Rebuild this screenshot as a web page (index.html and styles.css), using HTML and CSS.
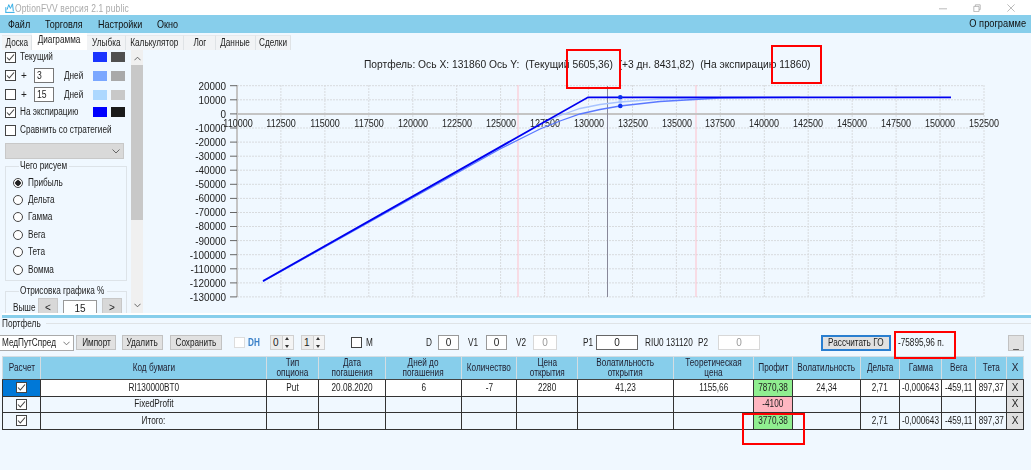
FILE: index.html
```html
<!DOCTYPE html>
<html lang="ru">
<head>
<meta charset="utf-8">
<title>OptionFVV</title>
<link rel="stylesheet" href="styles.css">
</head>
<body>
<div class="app">
  <header class="titlebar">
    <svg class="appicon" viewBox="0 0 12 12"><path d="M1 11.500V5M.5 11.300h11M2.500 8l2-6 2 4.500 2.500-5.500 1 9" fill="none" stroke="#35aee6" stroke-width="1.200"/></svg>
    <span class="apptitle nl">OptionFVV версия 2.1 public</span>
    <div class="winbtns">
      <svg viewBox="0 0 10 10"><path d="M0 6h10" stroke="#aaa" fill="none"/></svg>
      <svg viewBox="0 0 10 10"><path d="M1 3h6.500v6.500H1zM3 3V1h6v6H7.500" stroke="#aaa" fill="none"/></svg>
      <svg viewBox="0 0 10 10"><path d="M.5.500l9 9M9.500.500l-9 9" stroke="#aaa" fill="none"/></svg>
    </div>
  </header>
  <nav class="menubar">
    <span class="mi mi1 nl">Файл</span><span class="mi mi2 nl">Торговля</span><span class="mi mi3 nl">Настройки</span><span class="mi mi4 nl">Окно</span>
    <span class="menu-right">О программе</span>
  </nav>
  <div class="tabs">
    <span class="tab t1"><span class="n">Доска</span></span><span class="tab active t2"><span class="n">Диаграмма</span></span><span class="tab t3"><span class="n">Улыбка</span></span><span class="tab t4"><span class="n">Калькулятор</span></span><span class="tab t5"><span class="n">Лог</span></span><span class="tab t6"><span class="n">Данные</span></span><span class="tab t7"><span class="n">Сделки</span></span>
  </div>
  <main class="main">
    <aside class="side">
      <div class="row r1"><i class="cb on"></i><span class="lbl nl">Текущий</span><i class="sw s1"></i><i class="sw s2"></i></div>
      <div class="row r2"><i class="cb on"></i><span class="plus">+</span><span class="num"><span class="nl">3</span></span><span class="days nl">Дней</span><i class="sw s3"></i><i class="sw s4"></i></div>
      <div class="row r3"><i class="cb"></i><span class="plus">+</span><span class="num"><span class="nl">15</span></span><span class="days nl">Дней</span><i class="sw s5"></i><i class="sw s6"></i></div>
      <div class="row r4"><i class="cb on"></i><span class="lbl nl">На экспирацию</span><i class="sw s7"></i><i class="sw s8"></i></div>
      <div class="row r5"><i class="cb"></i><span class="lbl nl">Сравнить со стратегией</span></div>
      <div class="combo"><svg viewBox="0 0 8 5"><path d="M.5.500l3.500 3.500 3.500-3.500" fill="none" stroke="#666"/></svg></div>
      <fieldset class="grp g1">
        <legend class="lg1"><span class="nl">Чего рисуем</span></legend>
        <div class="radio"><i class="rd on"></i><span class="nl">Прибыль</span></div>
        <div class="radio"><i class="rd"></i><span class="nl">Дельта</span></div>
        <div class="radio"><i class="rd"></i><span class="nl">Гамма</span></div>
        <div class="radio"><i class="rd"></i><span class="nl">Вега</span></div>
        <div class="radio"><i class="rd"></i><span class="nl">Тета</span></div>
        <div class="radio"><i class="rd"></i><span class="nl">Вомма</span></div>
      </fieldset>
      <fieldset class="grp g2">
        <legend class="lg2"><span class="nl">Отрисовка графика %</span></legend>
        <div class="above"><span class="ab-l nl">Выше</span><span class="ab-b">&lt;</span><span class="ab-v">15</span><span class="ab-b">&gt;</span></div>
      </fieldset>
    </aside>
    <div class="vscroll">
      <svg class="sa" viewBox="0 0 8 5"><path d="M.5 4.500L4 1l3.500 3.500" fill="none" stroke="#555"/></svg>
      <div class="thumb"></div>
      <svg class="sa sb" viewBox="0 0 8 5"><path d="M.5.500L4 4l3.500-3.500" fill="none" stroke="#555"/></svg>
    </div>
    <svg class="chart" viewBox="145 50 886 263" width="886" height="263">
      <text class="ctitle" x="364" y="68">Портфель: Ось X: 131860 Ось Y:  (Текущий 5605,36)  (+3 дн. 8431,82)  (На экспирацию 11860)</text>
      <path class="grid" d="M237 85.700H984M237 99.800H984M237 128H984M237 142.100H984M237 156.200H984M237 170.200H984M237 184.300H984M237 198.400H984M237 212.500H984M237 226.500H984M237 240.600H984M237 254.700H984M237 268.800H984M237 282.900H984M237 296.900H984"/>
      <path class="grid" d="M280.900 85V297M324.900 85V297M368.800 85V297M412.800 85V297M456.700 85V297M500.600 85V297M544.600 85V297M588.500 85V297M632.500 85V297M676.400 85V297M720.300 85V297M764.300 85V297M808.200 85V297M852.200 85V297M896.100 85V297M940 85V297M984 85V297"/>
      <path class="pink" d="M518 85V297M696 85V297"/>
      <path class="axis" d="M237 85V297M237 114H984"/>
      <path class="tick" d="M230 85.700h7M230 99.800h7M230 113.900h7M230 128h7M230 142.100h7M230 156.200h7M230 170.200h7M230 184.300h7M230 198.400h7M230 212.500h7M230 226.500h7M230 240.600h7M230 254.700h7M230 268.800h7M230 282.900h7M230 296.900h7"/>
      <g class="yl">
        <text x="226" y="89.700">20000</text><text x="226" y="103.800">10000</text><text x="226" y="117.900">0</text><text x="226" y="132">-10000</text><text x="226" y="146.100">-20000</text><text x="226" y="160.200">-30000</text><text x="226" y="174.200">-40000</text><text x="226" y="188.300">-50000</text><text x="226" y="202.400">-60000</text><text x="226" y="216.500">-70000</text><text x="226" y="230.500">-80000</text><text x="226" y="244.600">-90000</text><text x="226" y="258.700">-100000</text><text x="226" y="272.800">-110000</text><text x="226" y="286.900">-120000</text><text x="226" y="300.900">-130000</text>
      </g>
      <g class="xl">
        <text x="238" y="127">110000</text><text x="281" y="127">112500</text><text x="325" y="127">115000</text><text x="369" y="127">117500</text><text x="413" y="127">120000</text><text x="457" y="127">122500</text><text x="501" y="127">125000</text><text x="545" y="127">127500</text><text x="589" y="127">130000</text><text x="633" y="127">132500</text><text x="677" y="127">135000</text><text x="720" y="127">137500</text><text x="764" y="127">140000</text><text x="808" y="127">142500</text><text x="852" y="127">145000</text><text x="896" y="127">147500</text><text x="940" y="127">150000</text><text x="984" y="127">152500</text>
      </g>
      <path class="cross" d="M607.500 86V297"/>
      <path class="l3" d="M263 281.500L500 147.500 520 136 540 124 560 115.500 580 108.500 600 104.500 620 102 660 99 720 97.600 800 97.300"/>
      <path class="l1" d="M263 281.500L500 149 520 139 540 129 560 121 580 114 600 109.500 620 106 660 101.500 720 98 800 97.300"/>
      <path class="l0" d="M263 281L588 97.300H951"/>
      <circle class="dot" cx="620.300" cy="97.300" r="2.300"/>
      <circle class="dot-l" cx="620.300" cy="102" r="2"/>
      <circle class="dot" cx="620.300" cy="106" r="2.300"/>
    </svg>
  </main>
  <div class="splitter"></div>
  <section class="bottom">
    <div class="group-head"><span class="nl">Портфель</span></div>
    <div class="toolbar">
      <div class="select"><span class="nl">МедПутСпред</span><svg viewBox="0 0 8 5"><path d="M.5.500l3.500 3.500 3.500-3.500" fill="none" stroke="#666"/></svg></div>
      <span class="btn b-imp"><span class="n">Импорт</span></span>
      <span class="btn b-del"><span class="n">Удалить</span></span>
      <span class="btn b-sav"><span class="n">Сохранить</span></span>
      <i class="cb dis m-dh"></i><span class="dh nl">DH</span>
      <span class="spin m-s1">0<b class="arrows"></b></span>
      <span class="spin m-s2">1<b class="arrows"></b></span>
      <i class="cb m-m"></i><span class="m-ml nl">M</span>
      <span class="m-d nl">D</span><span class="inp w21 m-i1">0</span>
      <span class="m-v1 nl">V1</span><span class="inp w21 m-i2">0</span>
      <span class="m-v2 nl">V2</span><span class="inp w24 dis m-i3">0</span>
      <span class="m-p1 nl">P1</span><span class="inp w42 dark m-i4">0</span>
      <span class="m-riu nl">RIU0 131120</span><span class="m-p2 nl">P2</span><span class="inp w42 dis m-i5">0</span>
      <span class="btn go"><span class="n">Рассчитать ГО</span></span>
      <span class="m-val nl">-75895,96 п.</span>
      <span class="btn under">_</span>
    </div>
    <table class="grid-t">
      <colgroup><col class="c1"><col class="c2"><col class="c3"><col class="c4"><col class="c5"><col class="c6"><col class="c7"><col class="c8"><col class="c9"><col class="c10"><col class="c11"><col class="c12"><col class="c13"><col class="c14"><col class="c15"><col class="c16"></colgroup>
      <thead>
        <tr><th><span class="n">Расчет</span></th><th><span class="n">Код бумаги</span></th><th><span class="n">Тип<br>опциона</span></th><th><span class="n">Дата<br>погашения</span></th><th><span class="n">Дней до<br>погашения</span></th><th><span class="n">Количество</span></th><th><span class="n">Цена<br>открытия</span></th><th><span class="n">Волатильность<br>открытия</span></th><th><span class="n">Теоретическая<br>цена</span></th><th><span class="n">Профит</span></th><th><span class="n">Волатильность</span></th><th><span class="n">Дельта</span></th><th><span class="n">Гамма</span></th><th><span class="n">Вега</span></th><th><span class="n">Тета</span></th><th>X</th></tr>
      </thead>
      <tbody>
        <tr><td class="sel"><i class="cb on"></i></td><td><span class="n">RI130000BT0</span></td><td><span class="n">Put</span></td><td><span class="n">20.08.2020</span></td><td><span class="n">6</span></td><td><span class="n">-7</span></td><td><span class="n">2280</span></td><td><span class="n">41,23</span></td><td><span class="n">1155,66</span></td><td class="green"><span class="n">7870,38</span></td><td><span class="n">24,34</span></td><td><span class="n">2,71</span></td><td><span class="n">-0,000643</span></td><td><span class="n">-459,11</span></td><td><span class="n">897,37</span></td><td class="x">X</td></tr>
        <tr><td><i class="cb on"></i></td><td><span class="n">FixedProfit</span></td><td></td><td></td><td></td><td></td><td></td><td></td><td></td><td class="red"><span class="n">-4100</span></td><td></td><td></td><td></td><td></td><td></td><td class="x">X</td></tr>
        <tr><td><i class="cb on"></i></td><td><span class="n">Итого:</span></td><td></td><td></td><td></td><td></td><td></td><td></td><td></td><td class="green"><span class="n">3770,38</span></td><td></td><td><span class="n">2,71</span></td><td><span class="n">-0,000643</span></td><td><span class="n">-459,11</span></td><td><span class="n">897,37</span></td><td class="x">X</td></tr>
      </tbody>
    </table>
  </section>
  <div class="mark m1"></div>
  <div class="mark m2"></div>
  <div class="mark m3"></div>
  <div class="mark m4"></div>
</div>
</body>
</html>
```

FILE: styles.css
```css
* { box-sizing: border-box; }
html, body { margin: 0; padding: 0; }
body { width: 1031px; height: 470px; overflow: hidden; background: #f0f8ff; }
.app {
  position: relative; width: 1031px; height: 470px; overflow: hidden;
  font: 10px/12px "Liberation Sans", Arial, sans-serif; color: #222;
  filter: blur(0.3px);
}
i { display: block; font-style: normal; flex: none; }

/* the reference's text is horizontally condensed */
.n { display: inline-block; margin: 0 -40px; transform: scaleX(.82); transform-origin: center; white-space: nowrap; }
.nl { display: inline-block; transform: scaleX(.82); transform-origin: left center; white-space: nowrap; }

/* title */
.titlebar { height: 15px; background: #fff; display: flex; align-items: center; padding-left: 5px; }
.appicon { width: 10px; height: 12px; flex: none; }
.apptitle { margin-left: 0; color: #aaa; font-size: 11px; letter-spacing: .2px; transform: scaleX(.77); }
.winbtns { margin-left: auto; display: flex; gap: 26px; padding-right: 16px; }
.winbtns svg { width: 8px; height: 8px; }

/* menu */
.menubar { height: 18px; background: #87ceeb; display: flex; align-items: center; padding: 0 5px 0 8px; font-size: 11px; color: #111; }
.mi1 { width: 37px; } .mi2 { width: 53px; } .mi3 { width: 59px; }
.menu-right { margin-left: auto; font-size: 10px; transform: scaleX(.93); transform-origin: right center; }

/* tabs */
.tabs { height: 17px; display: flex; align-items: flex-end; padding-left: 2px; }
.tab { height: 15px; background: #f1f3f5; border-right: 1px solid #dfe3e6; border-top: 1px solid #e6e9ec; text-align: center; line-height: 14px; }
.tab.active { height: 17px; background: #fff; border: 0; line-height: 14px; }
.t1 { width: 30px; } .t2 { width: 55px; } .t3 { width: 39px; } .t4 { width: 58px; } .t5 { width: 32px; } .t6 { width: 40px; } .t7 { width: 35px; }

/* main */
.main { height: 263px; display: flex; overflow: hidden; }
.side { width: 131px; height: 263px; overflow: hidden; padding-left: 5px; flex: none; }
.row { display: flex; align-items: center; width: 120px; }
.r1 { height: 16px; margin-top: -1px; }
.r2 { height: 17px; margin-top: 2px; }
.r3 { height: 17px; margin-top: 2px; }
.r4 { height: 14px; margin-top: 2px; }
.r5 { height: 14px; margin-top: 4px; }
.cb { width: 11px; height: 11px; border: 1px solid #444; background: #fff center/9px 9px no-repeat; }
.cb.on { background-image: url("data:image/svg+xml,%3Csvg xmlns='http://www.w3.org/2000/svg' viewBox='0 0 9 9'%3E%3Cpath d='M1 4.500l2.300 2.500L8 1.500' fill='none' stroke='%23444' stroke-width='1.100'/%3E%3C/svg%3E"); }
.cb.dis { border-color: #ddd; }
.lbl { margin-left: 4px; flex: 1; }
.plus { margin-left: 5px; width: 8px; }
.num { margin-left: 5px; width: 20px; height: 15px; background: #fff; border: 1px solid #777; padding-left: 2px; line-height: 13px; font-size: 10.500px; }
.days { margin-left: 10px; flex: 1; }
.sw { width: 14px; height: 10px; }
.sw + .sw { margin-left: 4px; }
.s1 { background: #1a35ff; } .s2 { background: #505050; }
.s3 { background: #7aa7ff; } .s4 { background: #a9a9a9; }
.s5 { background: #add8ff; } .s6 { background: #c8c8c8; }
.s7 { background: #0000ff; } .s8 { background: #1a1a1a; }
.combo { width: 119px; height: 16px; margin-top: 6px; background: #d9d9d9; border: 1px solid #c8c8c8; display: flex; align-items: center; justify-content: flex-end; padding-right: 3px; }
.combo svg { width: 8px; height: 5px; }
.grp { margin: 1px 0 0; padding: 0; border: 1px solid #dde3e8; width: 122px; min-width: 0; position: relative; }
.grp legend { margin-left: 6px; padding: 0 1px; line-height: 12px; }
.lg1 { width: 50px; }
.lg2 { width: 88px; }
.g1 { height: 121px; padding: 2px 0 0 7px; }
.g2 { height: 40px; margin-top: 4px; padding: 2px 0 0 7px; }
.radio { height: 17.400px; display: flex; align-items: center; gap: 5px; }
.rd { width: 10px; height: 10px; border: 1px solid #444; border-radius: 50%; background: #fff; position: relative; }
.rd.on { background: radial-gradient(circle, #222 0 2.500px, #fff 3px); }
.above { display: flex; align-items: center; margin-top: -1px; }
.ab-l { width: 25px; }
.ab-b { width: 20px; height: 20px; background: #d8d8d8; border: 1px solid #c8c8c8; text-align: center; line-height: 17px; }
.ab-v { width: 34px; height: 17px; margin: 0 5px; border: 1px solid #999; background: #fff; text-align: center; line-height: 15px; }
.vscroll { width: 12px; height: 263px; background: #f0f0f0; flex: none; position: relative; display: flex; flex-direction: column; align-items: center; padding-top: 6px; }
.sa { width: 7px; height: 5px; flex: none; }
.thumb { width: 12px; height: 155px; margin-top: 4px; background: #c8c8c8; }
.sb { margin-top: auto; margin-bottom: 5px; }
.chart { display: block; margin-left: 2px; flex: none; }
.ctitle { font-size: 11.500px; fill: #222; white-space: pre; transform-box: fill-box; transform-origin: left center; transform: scaleX(.893); }
.grid { stroke: #d8dbde; stroke-width: 1; stroke-dasharray: 2 1; fill: none; }
.pink { stroke: #ffc0cb; fill: none; }
.axis { stroke: #c4c4c4; stroke-width: 2; fill: none; }
.tick { stroke: #666; fill: none; }
.yl text { font-size: 11px; text-anchor: end; fill: #222; transform-box: fill-box; transform-origin: right center; transform: scaleX(.9); }
.xl text { font-size: 11px; text-anchor: middle; fill: #222; transform-box: fill-box; transform-origin: center; transform: scaleX(.82); }
.cross { stroke: #889; fill: none; }
.l0 { stroke: #0000f0; stroke-width: 1.800; fill: none; }
.l1 { stroke: #5a78ff; stroke-width: 1.300; fill: none; }
.l3 { stroke: #a8c4ff; stroke-width: 1.300; fill: none; }
.dot { fill: #0a30f0; }
.dot-l { fill: #a8c4ff; }

/* bottom */
.splitter { height: 5px; border-top: 2px solid #fff; background: #87ceeb; margin-left: 2px; }
.bottom { height: 152px; }
.group-head { height: 11px; display: flex; align-items: center; padding-left: 2px; }
.group-head span { padding-top: 1px; width: 40px; }
.group-head::after { content: ""; flex: 1; margin-left: 4px; height: 1px; background: #dfe3e6; }
.toolbar { height: 21px; margin-top: 3px; display: flex; align-items: center; white-space: nowrap; }
.select { width: 74px; height: 16px; background: #fff; border: 1px solid #aaa; border-left: 0; line-height: 14px; padding-left: 2px; position: relative; flex: none; }
.select svg { position: absolute; right: 3px; top: 5px; width: 7px; height: 5px; }
.btn { height: 15px; background: #e1e1e1; border: 1px solid #c2c2c2; text-align: center; line-height: 13px; flex: none; }
.b-imp { width: 40px; margin-left: 2px; }
.b-del { width: 41px; margin-left: 6px; }
.b-sav { width: 52px; margin-left: 7px; }
.m-dh { margin-left: 12px; }
.dh { margin-left: 3px; color: #3a80c8; width: 12px; font-weight: 700; }
.spin { width: 24px; height: 15px; background: #ececec; border: 1px solid #d0d0d0; padding-left: 2px; line-height: 13px; position: relative; flex: none; }
.arrows { position: absolute; right: 0; top: 0; width: 11px; height: 13px; background: #f4f4f4; border-left: 1px solid #d0d0d0; }
.arrows::before, .arrows::after { content: ""; position: absolute; left: 2px; border: 2px solid transparent; }
.arrows::before { top: -1px; border-bottom: 3px solid #333; }
.arrows::after { bottom: -1px; border-top: 3px solid #333; }
.m-s1 { margin-left: 10px; }
.m-s2 { margin-left: 7px; }
.m-m { margin-left: 26px; }
.m-ml { margin-left: 4px; width: 8px; }
.m-d { margin-left: 52px; width: 8px; }
.inp { height: 15px; background: #fff; border: 1px solid #999; text-align: center; line-height: 13px; flex: none; }
.inp.dis { border-color: #d8d8d8; color: #999; }
.inp.dark { border-color: #666; }
.w21 { width: 21px; } .w24 { width: 24px; } .w42 { width: 42px; }
.m-i1 { margin-left: 4px; }
.m-v1 { margin-left: 9px; width: 12px; }
.m-i2 { margin-left: 6px; }
.m-v2 { margin-left: 9px; width: 12px; }
.m-i3 { margin-left: 5px; }
.m-p1 { margin-left: 26px; width: 10px; }
.m-i4 { margin-left: 3px; }
.m-riu { margin-left: 7px; width: 48px; }
.m-p2 { margin-left: 5px; width: 10px; }
.m-i5 { margin-left: 10px; }
.go { width: 70px; margin-left: 61px; border: 2px solid #2a7fd0; height: 16px; line-height: 11px; }
.m-val { margin-left: 7px; width: 45px; }
.under { width: 16px; margin-left: 65px; height: 16px; line-height: 18px; }

.grid-t { table-layout: fixed; border-collapse: collapse; width: 1021px; margin: 3px 0 0 2px; border: 1px solid #444; }
.c1 { width: 38px; } .c2 { width: 226px; } .c3 { width: 52px; } .c4 { width: 67px; } .c5 { width: 76px; } .c6 { width: 55px; } .c7 { width: 61px; } .c8 { width: 96px; } .c9 { width: 80px; } .c10 { width: 39px; } .c11 { width: 68px; } .c12 { width: 39px; } .c13 { width: 42px; } .c14 { width: 34px; } .c15 { width: 31px; } .c16 { width: 17px; }
.grid-t th { height: 23px; padding: 0; background: #87ceeb; font-weight: 400; line-height: 10px; color: #223; border: 1px solid #d4dde2; border-bottom: 1px solid #444; overflow: hidden; white-space: nowrap; }
.grid-t td { height: 16.500px; padding: 0; background: #f0f8ff; border: 1px solid #333; text-align: center; white-space: nowrap; overflow: hidden; line-height: 12px; }
.grid-t tbody tr:first-child td { background: #fff; }
.grid-t td .cb { margin: 0 auto; }
.grid-t tbody tr:first-child td.sel { background: #0078d7; }
.grid-t tbody tr td.green { background: #90ee90; }
.grid-t tbody tr td.red { background: #ffb6c1; }
.grid-t tbody tr td.x { background: #e0e0e0; }

/* annotations */
.mark { position: absolute; border: 2px solid #f00; }
.m1 { left: 566px; top: 49px; width: 55px; height: 40px; }
.m2 { left: 771px; top: 45px; width: 51px; height: 39px; }
.m3 { left: 894px; top: 331px; width: 62px; height: 28px; }
.m4 { left: 742px; top: 413px; width: 63px; height: 32px; }
```
